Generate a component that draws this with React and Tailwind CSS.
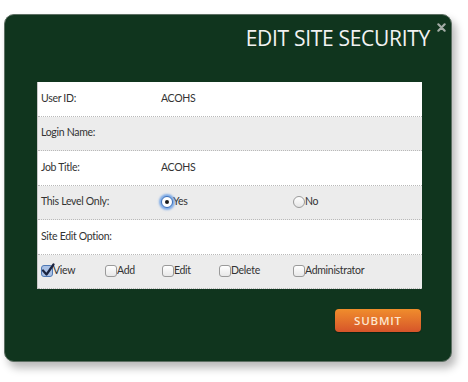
import React, { useState } from 'react';

const rows = [
  { label: 'User ID:', value: 'ACOHS' },
  { label: 'Login Name:', value: '' },
  { label: 'Job Title:', value: 'ACOHS' },
];

function Radio({ checked, focused }) {
  return (
    <span
      className={`relative inline-flex h-[12px] w-[12px] items-center justify-center rounded-full border ${
        checked ? 'border-[#3b6fb8] bg-white' : 'border-[#9a9a9a] bg-gradient-to-b from-white to-[#e6e6e6]'
      } ${focused ? 'shadow-[0_0_2px_2px_rgba(90,150,230,0.75)]' : ''}`}
    >
      {checked && <span className="h-[4px] w-[4px] rounded-full bg-[#1a1a1a]" />}
    </span>
  );
}

function Checkbox({ checked }) {
  return (
    <span
      className={`relative inline-block h-[12px] w-[12px] rounded-[3px] border ${
        checked ? 'border-[#4f78b3] bg-[#a9c1e6]' : 'border-[#9a9a9a] bg-gradient-to-b from-white to-[#e8e8e8]'
      }`}
    >
      {checked && (
        <svg viewBox="0 0 14 14" className="absolute -left-[1px] -top-[3px] h-[14px] w-[14px]">
          <path d="M2 7.5 L5.5 11.5 L12.5 1.5" fill="none" stroke="#1b2440" strokeWidth="2.2" strokeLinecap="round" strokeLinejoin="round" />
        </svg>
      )}
    </span>
  );
}

export default function App() {
  const [level, setLevel] = useState('yes');
  const [opts, setOpts] = useState({ View: true, Add: false, Edit: false, Delete: false, Administrator: false });
  const optWidths = { View: 'w-[64px]', Add: 'w-[57px]', Edit: 'w-[57px]', Delete: 'w-[74px]', Administrator: 'w-[90px]' };

  const rowCls = 'flex h-[34.5px] items-center border-b border-dotted border-[#b9b9b9]';

  return (
    <div className="h-[382px] w-[468px] bg-white pl-[4px] pt-[14px]" style={{ fontFamily: '"Open Sans", "DejaVu Sans", sans-serif' }}>
      <div className="relative h-[348px] w-[448px] rounded-[10px] border border-[#5d6f63] bg-[#10351e] shadow-[4px_6px_8px_rgba(0,0,0,0.28)]">
        <button className="absolute right-[5px] top-[8px]">
          <svg viewBox="0 0 10 10" className="h-[9px] w-[9px]">
            <path d="M1.5 1.5 L8.5 8.5 M8.5 1.5 L1.5 8.5" stroke="#a3aca6" strokeWidth="2.4" strokeLinecap="round" />
          </svg>
        </button>
        <div className="pr-[21px] pt-[9px] text-right text-[21px] leading-[28px] tracking-[-0.3px] text-[#f2f2f2]">
          EDIT SITE SECURITY
        </div>

        <div
          className="ml-[32px] mt-[30px] w-[385px] border-l border-[#c8c8c8] text-[10.5px] tracking-[-0.3px] text-[#333]"
          style={{ fontFamily: 'Lato, "Open Sans", sans-serif' }}
        >
          {rows.map((r, i) => (
            <div key={r.label} className={`${rowCls} ${i % 2 === 0 ? 'bg-white' : 'bg-[#ececec]'}`}>
              <span className="w-[123px] pl-[3px]">{r.label}</span>
              <span>{r.value}</span>
            </div>
          ))}
          <div className={`${rowCls} bg-[#ececec]`}>
            <span className="w-[123px] pl-[3px]">This Level Only:</span>
            <label className="flex w-[132px] items-center" onClick={() => setLevel('yes')}>
              <Radio checked={level === 'yes'} focused={level === 'yes'} />
              <span>Yes</span>
            </label>
            <label className="flex items-center" onClick={() => setLevel('no')}>
              <Radio checked={level === 'no'} />
              <span>No</span>
            </label>
          </div>
          <div className={`${rowCls} bg-white`}>
            <span className="pl-[3px]">Site Edit Option:</span>
          </div>
          <div className={`${rowCls} bg-[#ececec] pl-[3px]`}>
            {Object.keys(opts).map((k) => (
              <label
                key={k}
                className={`flex items-center ${optWidths[k]}`}
                onClick={() => setOpts({ ...opts, [k]: !opts[k] })}
              >
                <Checkbox checked={opts[k]} />
                <span>{k}</span>
              </label>
            ))}
          </div>
        </div>

        <div className="mr-[30px] mt-[20px] flex justify-end">
          <button className="h-[23px] w-[86px] rounded-[4px] bg-gradient-to-b from-[#f08d2c] to-[#d6542a] text-[11.5px] font-semibold tracking-[0.8px] text-[#fde6cf] shadow-[0_1px_1px_rgba(0,0,0,0.3)]">
            SUBMIT
          </button>
        </div>
      </div>
    </div>
  );
}
